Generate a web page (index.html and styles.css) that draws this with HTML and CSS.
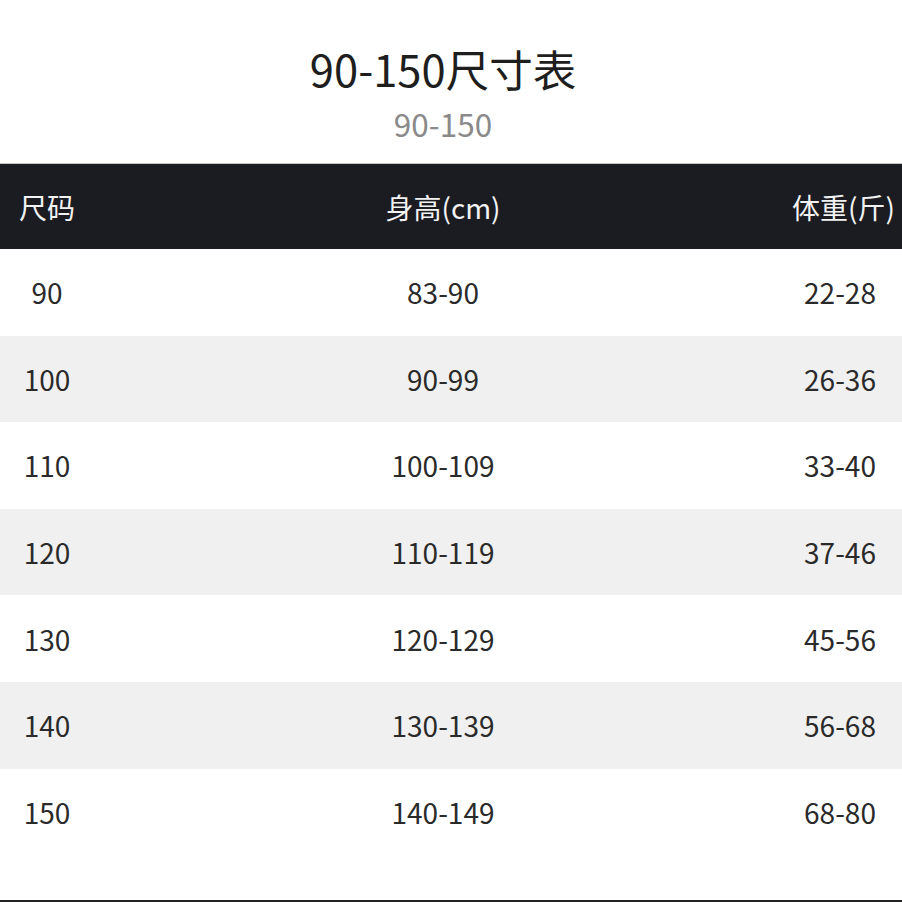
FILE: index.html
```html
<!DOCTYPE html>
<html lang="zh">
<head>
<meta charset="utf-8">
<title>90-150尺寸表</title>
<link rel="stylesheet" href="styles.css">
</head>
<body>
<div class="page">
  <h1 class="title">90-150尺寸表</h1>
  <div class="subtitle">90-150</div>
  <div class="table">
    <div class="row head"><span>尺码</span><span>身高(cm)</span><span>体重(斤)</span></div>
    <div class="row"><span>90</span><span>83-90</span><span>22-28</span></div>
    <div class="row alt"><span>100</span><span>90-99</span><span>26-36</span></div>
    <div class="row"><span>110</span><span>100-109</span><span>33-40</span></div>
    <div class="row alt"><span>120</span><span>110-119</span><span>37-46</span></div>
    <div class="row"><span>130</span><span>120-129</span><span>45-56</span></div>
    <div class="row alt"><span>140</span><span>130-139</span><span>56-68</span></div>
    <div class="row"><span>150</span><span>140-149</span><span>68-80</span></div>
  </div>
  <div class="bottom-line"></div>
</div>
</body>
</html>
```
FILE: styles.css
```css
html, body {
  margin: 0;
  padding: 0;
  background: #ffffff;
}
body {
  font-family: "Noto Sans CJK SC", "Noto Sans", sans-serif;
  color: #222;
}
.page {
  width: 902px;
  height: 902px;
  display: flex;
  flex-direction: column;
  overflow: hidden;
}
.title {
  margin: 44px 0 0;
  padding-right: 16px;
  font-size: 43.5px;
  font-weight: 400;
  line-height: 50px;
  text-align: center;
  color: #1e1e1e;
}
.subtitle {
  margin-top: 9px;
  padding-right: 16px;
  font-size: 31.5px;
  line-height: 40px;
  text-align: center;
  color: #8a8a8a;
}
.table {
  margin-top: 20px;
  border-top: 1px solid #c8c8c8;
}
.row {
  display: grid;
  grid-template-columns: 94px 1fr 96px;
  padding-right: 14px;
  height: 86.6px;
  align-items: center;
  font-size: 28px;
  color: #2a2a2a;
}
.row span {
  text-align: center;
  white-space: nowrap;
}
.row.head {
  height: 85px;
  background: #1b1b22;
  color: #f2f2f2;
  font-size: 28px;
}
.row.alt {
  background: #f0f0f0;
}
.bottom-line {
  margin-top: auto;
  height: 2px;
  background: #222;
}
```
